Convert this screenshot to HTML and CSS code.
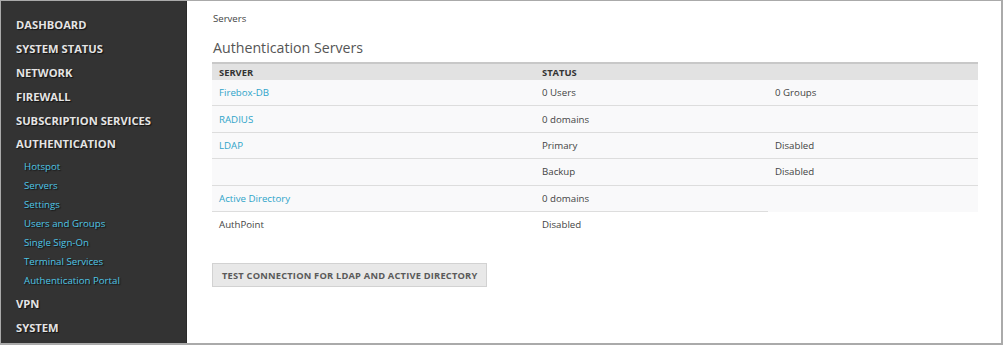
FILE: index.html
```html
<!DOCTYPE html>
<html lang="en">
<head>
  <meta charset="UTF-8">
  <title>Authentication Servers</title>
  <link rel="stylesheet" href="styles.css">
</head>
<body>
  <div class="frame">
    <nav class="sidebar">
      <a class="menu-title" href="#">DASHBOARD</a>
      <a class="menu-title" href="#">SYSTEM STATUS</a>
      <a class="menu-title" href="#">NETWORK</a>
      <a class="menu-title" href="#">FIREWALL</a>
      <a class="menu-title" href="#">SUBSCRIPTION SERVICES</a>
      <a class="menu-title" href="#">AUTHENTICATION</a>
      <div class="submenu">
        <a href="#">Hotspot</a>
        <a href="#">Servers</a>
        <a href="#">Settings</a>
        <a href="#">Users and Groups</a>
        <a href="#">Single Sign-On</a>
        <a href="#">Terminal Services</a>
        <a href="#">Authentication Portal</a>
      </div>
      <a class="menu-title" href="#">VPN</a>
      <a class="menu-title" href="#">SYSTEM</a>
    </nav>

    <main class="content">
      <div class="breadcrumb">Servers</div>
      <h2>Authentication Servers</h2>

      <table class="servers">
        <thead>
          <tr>
            <th class="col-server">SERVER</th>
            <th class="col-status">STATUS</th>
            <th></th>
          </tr>
        </thead>
        <tbody>
          <tr>
            <td><a href="#">Firebox-DB</a></td>
            <td>0 Users</td>
            <td>0 Groups</td>
          </tr>
          <tr>
            <td><a href="#">RADIUS</a></td>
            <td>0 domains</td>
            <td></td>
          </tr>
          <tr>
            <td><a href="#">LDAP</a></td>
            <td>Primary</td>
            <td>Disabled</td>
          </tr>
          <tr>
            <td></td>
            <td>Backup</td>
            <td>Disabled</td>
          </tr>
          <tr class="open-end">
            <td><a href="#">Active Directory</a></td>
            <td>0 domains</td>
            <td></td>
          </tr>
          <tr class="plain">
            <td>AuthPoint</td>
            <td>Disabled</td>
            <td></td>
          </tr>
        </tbody>
      </table>

      <button class="test-btn" type="button">TEST CONNECTION FOR LDAP AND ACTIVE DIRECTORY</button>
    </main>
  </div>
</body>
</html>
```

FILE: styles.css
```css
body {
  margin: 0;
  font-family: "Open Sans", Arial, sans-serif;
  background-color: #ffffff;
}

.frame {
  display: flex;
  width: 1003px;
  height: 345px;
  box-sizing: border-box;
  border: 1px solid #aaaaaa;
  border-right-width: 2px;
  border-bottom-width: 2px;
  overflow: hidden;
}

.sidebar {
  width: 185px;
  flex-shrink: 0;
  background-color: #333333;
  border-right: 1px solid #2a2a2a;
  padding-top: 15px;
  display: flex;
  flex-direction: column;
}

.menu-title {
  display: block;
  height: 24px;
  line-height: 18px;
  padding-left: 15px;
  color: #e4e4e4;
  font-size: 11.2px;
  font-weight: 700;
  text-decoration: none;
  text-shadow: 1px 1px 1px #111111;
}

.submenu {
  display: flex;
  flex-direction: column;
  margin-top: -2px;
  margin-bottom: 5px;
}

.submenu a {
  display: block;
  height: 19px;
  line-height: 19px;
  padding-left: 23px;
  color: #4fc6e6;
  font-size: 9.7px;
  text-decoration: none;
  text-shadow: 1px 1px 1px #111111;
}

.content {
  flex: 1;
  padding: 10px 22px 0 25px;
  color: #444444;
}

.breadcrumb {
  font-size: 9.6px;
  line-height: 16px;
  color: #444444;
  padding-left: 1px;
}

h2 {
  margin: 10px 0 3px 1px;
  font-size: 14.2px;
  font-weight: 400;
  line-height: 22px;
  color: #555555;
}

.servers {
  width: 766px;
  border-collapse: collapse;
  font-size: 9.7px;
}

.servers th {
  background-color: #e2e2e2;
  border-top: 2px solid #c8c8c8;
  height: 16px;
  padding: 0 7px;
  text-align: left;
  font-weight: 700;
  font-size: 9.4px;
  color: #333333;
}

.col-server {
  width: 309px;
}

.col-status {
  width: 219px;
}

.servers td {
  height: 25.4px;
  padding: 0 7px;
  background-color: #f9f9fa;
  border-bottom: 1px solid #dddddd;
  color: #444444;
}

.servers td a {
  color: #2ea4c9;
  text-decoration: none;
}

.servers .open-end td:last-child {
  border-bottom-color: #f9f9fa;
}

.servers .plain td {
  background-color: #ffffff;
  border-bottom: none;
}

.test-btn {
  margin-top: 26px;
  height: 24px;
  padding: 0 9px;
  background-color: #e8e8e8;
  border: 1px solid #d2d2d2;
  border-radius: 0;
  font-family: "Open Sans", Arial, sans-serif;
  font-size: 9.3px;
  font-weight: 700;
  color: #5a5a5a;
  letter-spacing: 0.2px;
}
```
